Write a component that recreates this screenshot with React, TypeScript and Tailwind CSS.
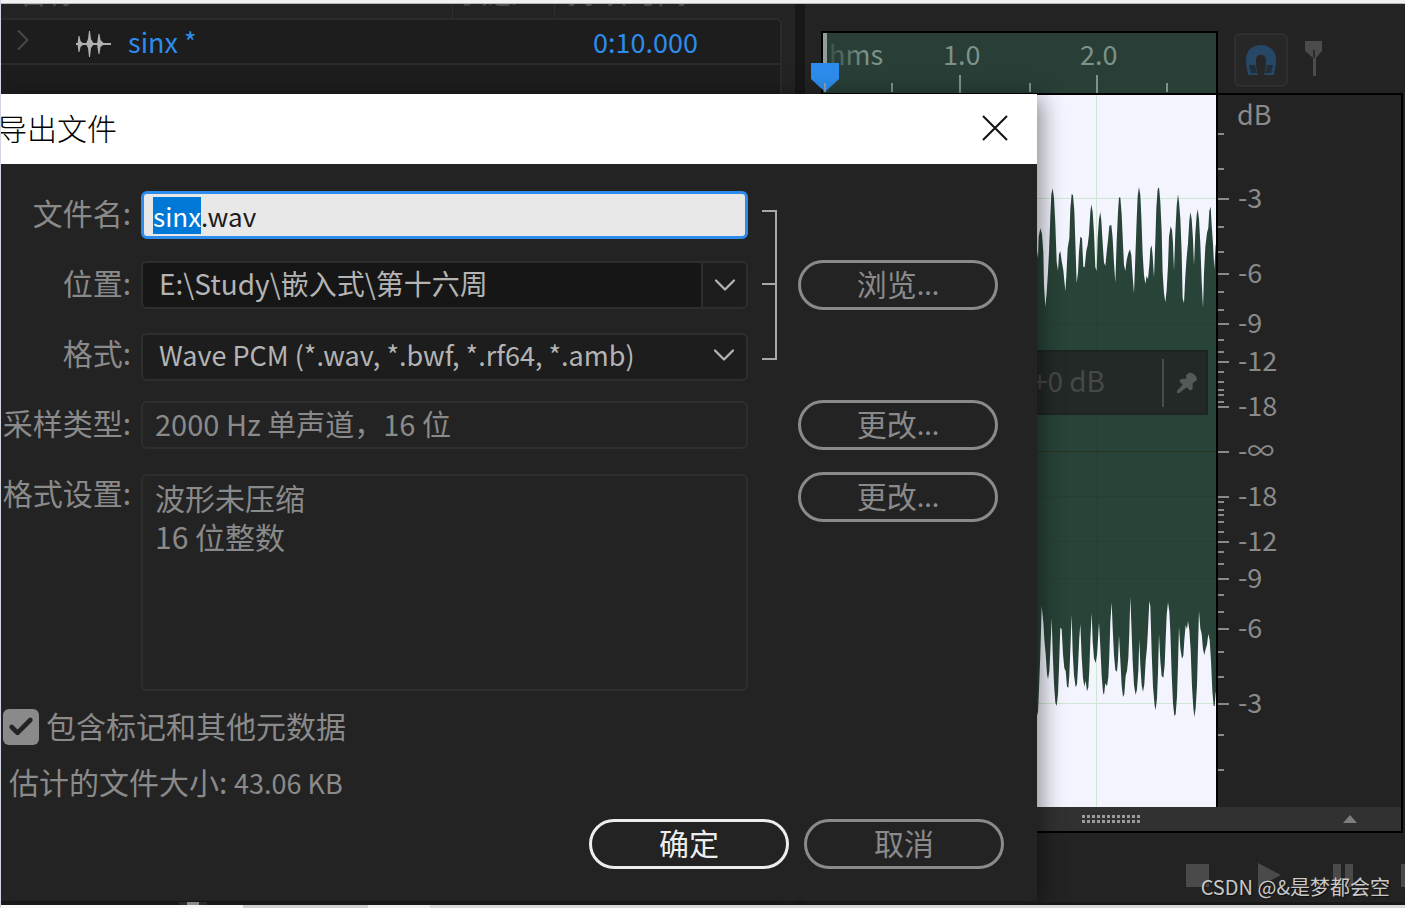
import React, { useEffect, useRef } from 'react';
import { Check, ChevronDown, ChevronRight } from 'lucide-react';

const upperWave =
  '50,475 54,505 56,440 61,415 66,432 70,488 72,585 76,650 80,608 84,545 87,487 91,378 94,313 98,295 102,325 106,402 110,515 114,542 117,492 121,484 125,512 130,541 136,604 139,558 143,475 148,445 151,356 155,312 159,315 163,362 166,455 170,580 174,547 177,485 181,440 186,445 190,530 194,532 199,482 203,466 207,433 211,366 214,343 218,366 222,429 226,532 230,543 233,444 237,388 241,366 244,392 248,460 252,518 256,527 260,487 264,450 268,407 274,405 278,445 282,520 286,578 290,455 294,366 297,322 301,323 305,373 309,462 312,525 316,543 320,510 325,489 330,478 334,496 338,560 342,610 346,502 350,390 353,318 357,291 361,315 364,380 368,492 372,555 376,582 380,557 384,568 388,525 391,477 395,466 398,498 402,563 406,452 409,354 413,298 417,292 421,335 425,423 428,548 432,610 436,637 440,600 444,527 447,440 452,409 456,420 459,460 462,542 466,428 470,348 474,313 477,335 481,385 485,487 488,625 492,640 496,557 500,502 504,460 508,392 511,366 515,387 519,448 522,526 526,430 530,375 533,358 537,387 541,462 545,572 549,654 552,548 556,470 561,429 565,413 568,362 572,350 575,405 579,462 583,538 587,464 590,464';

const lowerWave =
  '50,472 54,455 57,388 61,283 65,138 70,187 73,240 77,283 81,342 84,358 88,333 91,270 95,174 98,275 102,373 106,428 110,438 114,402 117,323 121,203 125,207 129,283 133,325 137,333 141,380 145,383 148,346 151,268 155,164 158,275 162,346 167,382 171,373 174,322 178,232 181,193 185,290 189,354 193,380 197,362 201,394 205,382 208,330 211,240 215,159 218,243 222,295 227,309 231,285 234,238 237,187 241,260 245,348 249,397 252,405 256,370 261,379 265,352 268,286 271,187 275,127 278,205 282,286 286,330 291,335 294,300 297,226 301,300 305,376 309,411 313,402 317,347 321,333 325,294 328,216 331,110 334,192 338,303 342,376 347,405 351,388 355,332 358,238 361,316 365,376 369,396 373,373 377,303 381,262 384,208 388,123 391,139 395,276 399,380 404,437 407,450 411,415 414,338 417,222 421,303 425,348 430,353 434,316 437,238 440,165 444,127 448,155 451,215 455,342 459,430 463,468 467,463 471,410 474,313 477,200 481,265 486,296 490,287 493,240 497,196 501,207 504,183 508,210 512,271 516,380 520,443 523,472 527,445 531,376 534,262 537,153 541,205 545,222 549,268 553,285 557,267 561,254 565,221 569,240 573,303 577,393 581,438 584,438 587,397 590,397';

const levels = [
  { y: 103, label: '-3' },
  { y: 178, label: '-6' },
  { y: 228, label: '-9' },
  { y: 266, label: '-12' },
  { y: 311, label: '-18' },
  { y: 356, label: '-∞' },
  { y: 401, label: '-18' },
  { y: 446, label: '-12' },
  { y: 483, label: '-9' },
  { y: 533, label: '-6' },
  { y: 608, label: '-3' }
];

const minorLevels = [
  38, 73, 131, 156, 196, 214, 244, 256, 276, 286, 294, 299, 306,
  406, 414, 419, 426, 436, 456, 468, 499, 516, 556, 581, 639, 674
];

const FilesPanel: React.FC = () => (
  <div className="overflow-hidden pr-[13px]">
    <table className="-mt-[29px] w-full table-fixed border-separate border-spacing-0 text-left">
      <thead>
        <tr className="text-[30px] leading-[30px] text-[#4c4c4c]">
          <th className="w-[451px] pb-[13px] pl-4 font-normal">名称</th>
          <th className="w-[102px] border-l border-[#2e2e2e] pb-[13px] pl-1 font-normal">状态</th>
          <th className="border-l border-[#2e2e2e] pb-[13px] pl-3 font-normal">持续时间</th>
        </tr>
      </thead>
      <tbody className="bg-[#1d1d1d] text-[27px] leading-[43px] text-[#2d8ceb]">
        <tr>
          <td className="border-y-2 border-[#2b2b2b] p-0">
            <div className="flex items-center">
              <ChevronRight className="mb-1 ml-1 h-9 w-9 text-[#4a4a4a]" strokeWidth={1.25} />
              <svg className="mt-1 mr-4 ml-[35px]" width="36" height="28" viewBox="0 0 36 28" fill="#b0b0b0">
                <path d="M0 13h35v2H0zM1.500 14 2.500 6h1l1 5 3.500 3-3.500 3-1 5h-1zM10 14l2-5 1-8h1l1 8 3 5-3 4-1 9h-1l-1-9zM21 14l1.500-10h1l1 6 4 4-4 3-1 7h-1z" />
              </svg>
              sinx *
            </div>
          </td>
          <td className="border-y-2 border-[#2b2b2b] p-0" />
          <td className="rounded-tr-md border-y-2 border-r-2 border-[#2b2b2b] p-0 pl-[39px]">0:10.000</td>
        </tr>
        <tr>
          <td colSpan={3} className="h-[900px] border-r-2 border-[#2b2b2b]" />
        </tr>
      </tbody>
    </table>
  </div>
);

const Ruler: React.FC = () => (
  <div className="flex">
    <div className="flex-1 border-2 border-b-0 border-black bg-[#283e37]">
      <svg className="block h-[60px] w-full overflow-visible text-[27px]" fill="#7d9288">
        <defs>
          <linearGradient id="fade" gradientUnits="userSpaceOnUse" x1="4" x2="44" y1="0" y2="0">
            <stop offset="0" stopColor="#354e45" />
            <stop offset="1" stopColor="#7d9288" />
          </linearGradient>
        </defs>
        <text x="6" y="32" fill="url(#fade)">hms</text>
        <text x="120" y="32">1.0</text>
        <text x="257" y="32">2.0</text>
        {[136, 273].map((x) => (
          <rect key={x} x={x} y="42" width="2" height="18" />
        ))}
        {[68, 206, 343].map((x) => (
          <rect key={x} x={x} y="50" width="2" height="9" />
        ))}
        <rect width="4" height="30" fill="#919f98" />
        <path d="M-12 30h28v16L2 59-12 46z" fill="#2d8ceb" />
        <rect x="1" y="50" width="2" height="9" fill="#8fa0a6" />
      </svg>
    </div>
    <div className="flex w-[187px] items-start gap-4 pt-0.5 pl-4">
      <button
        aria-label="Snap"
        className="flex h-[54px] w-[54px] items-center justify-center rounded-md border-2 border-[#2f2f2f] bg-[#272727]"
      >
        <svg width="30" height="30" viewBox="0 0 30 30">
          <path d="M2 30C1 24 0 20 0 15 0 5 7 0 15 0s15 5 15 15c0 5-1 9-2 15H18l2-10v-5c0-7-10-7-10 0v5l2 10z" fill="#264766" />
          <path d="M3 20h6l2 8H5zM27 20h-6l-2 8h6z" fill="#222d37" />
        </svg>
      </button>
      <svg className="mt-2" width="20" height="36" viewBox="0 0 20 36" fill="#4b4b4b">
        <path d="M1 0h17v10l-6 7v18h-3V17l-8-7z" />
        <path d="M9 9h2v8H9z" fill="#2b2b2b" />
      </svg>
    </div>
  </div>
);

const Waveform: React.FC = () => (
  <div className="relative flex-1 border-r-2 border-black bg-[#f4f4ff]">
    <svg className="block h-[712px] w-full overflow-hidden">
      <g fill="#cfe6d0">
        <rect x="273" width="1" height="100%" />
        <rect y="103" width="100%" height="1" />
        <rect y="608" width="100%" height="1" />
      </g>
      <g transform="translate(197 -5) scale(0.33333)">
        <polygon points={`-600,475 ${upperWave} 590,1120 -600,1120`} fill="#284338" />
      </g>
      <g transform="translate(197 465) scale(0.33333)">
        <polygon points={`-600,472 ${lowerWave} 590,-310 -600,-310`} fill="#284338" />
      </g>
      <g fill="#243d32" opacity="0.5">
        <rect y="228" width="100%" height="1" />
        <rect y="401" width="100%" height="1" />
        <rect y="446" width="100%" height="1" />
        <rect y="483" width="100%" height="1" />
        <rect x="273" y="180" width="1" height="352" />
      </g>
      <rect y="356" width="100%" height="1" fill="#2b3420" />
    </svg>

    {/* Gain HUD floats over the waveform */}
    <div className="absolute top-[255px] right-2 flex h-[65px] w-[300px] items-center justify-end border-2 border-[#1d2522] bg-[#232927] pr-2 text-[28px] text-[#454947]">
      <span className="pb-1.5">+0 dB</span>
      <span className="mr-3 ml-[57px] h-12 w-0.5 bg-[#484d4b]" />
      <svg width="22" height="22" viewBox="0 0 66 66" fill="#555a58">
        <path d="M30 10 38 3Q46 0 56 8q8 8 7 16L50 34v16l-7 6-11-10L10 63H3v-7l17-18-10-10 5-7 16-1z" />
      </svg>
    </div>
  </div>
);

const LevelScale: React.FC = () => (
  <svg className="block h-[712px] w-[183px] text-[27px]" fill="#8a8a8a">
    <text x="19" y="30">dB</text>
    {levels.map((level) => (
      <g key={level.y}>
        <rect y={level.y} width="11" height="2" />
        <text x="20" y={level.y + 10}>{level.label}</text>
      </g>
    ))}
    {minorLevels.map((y) => (
      <rect key={y} y={y} width="6" height="2" />
    ))}
  </svg>
);

const Editor: React.FC = () => (
  <div className="flex flex-col overflow-hidden border-l-[10px] border-[#171717] pt-[27px]">
    <div className="flex-none pl-4">
      <Ruler />
      <div className="mr-0.5 border-2 border-black">
        <div className="flex">
          <Waveform />
          <LevelScale />
        </div>
        <div className="flex h-6 items-center bg-[#313131]">
          <svg className="ml-[259px]" width="60" height="8" fill="#9a9a9a">
            {Array.from({ length: 12 }, (_, i) => (
              <g key={i}>
                <rect x={i * 5} y="0" width="3" height="3" />
                <rect x={i * 5} y="5" width="3" height="3" />
              </g>
            ))}
          </svg>
          <svg className="mr-11 ml-auto" width="14" height="8" fill="#7d7d7d">
            <path d="M7 0l7 8H0z" />
          </svg>
        </div>
      </div>
    </div>
    <div className="-mr-5 flex justify-end gap-12 pt-[30px] text-[#4a4a4a]">
      <button aria-label="Stop">
        <svg width="24" height="24" fill="currentColor"><path d="M1 1h23v23H1z" /></svg>
      </button>
      <button aria-label="Play">
        <svg width="24" height="24" fill="currentColor"><path d="M1 0l23 12L1 24z" /></svg>
      </button>
      <button aria-label="Pause">
        <svg width="24" height="24" fill="currentColor"><path d="M4 1h8v23H4zM16 1h8v23h-8z" /></svg>
      </button>
      <button aria-label="Previous">
        <svg width="24" height="24" fill="currentColor"><path d="M0 1h4v23H0zM24 1v23L6 12z" /></svg>
      </button>
    </div>
  </div>
);

const pill =
  'flex h-[50px] w-[200px] items-center justify-center rounded-full border-[3px] pb-1 text-[30px] leading-none';

const ExportDialog: React.FC = () => {
  const nameRef = useRef<HTMLInputElement>(null);

  useEffect(() => {
    nameRef.current?.focus();
    nameRef.current?.setSelectionRange(0, 4);
  }, []);

  return (
    <div
      role="dialog"
      aria-labelledby="export-title"
      className="absolute top-[94px] left-0 w-[1036px] max-w-full bg-[#232323] shadow-[4px_4px_22px_rgba(0,0,0,0.45)]"
    >
      {/* Title bar */}
      <div className="flex h-[70px] items-center justify-between overflow-hidden bg-white pb-0.5 text-black">
        <h1 id="export-title" className="-ml-1 pb-0.5 text-[30px] font-light">导出文件</h1>
        <button aria-label="Close" className="mr-[29px]">
          <svg width="26" height="26" viewBox="0 0 26 26" stroke="#111" strokeWidth="2">
            <path d="M1 1l24 24M25 1L1 25" />
          </svg>
        </button>
      </div>

      <form className="pt-[26px] pb-8 text-[30px] text-[#8a8a8a]">
        <div className="grid grid-cols-[130px_617px_50px_200px] grid-rows-[repeat(4,50px)_auto] gap-y-5">
          {/* File name */}
          <label htmlFor="name" className="text-right leading-[45px]">文件名:</label>
          <input
            id="name"
            ref={nameRef}
            defaultValue="sinx.wav"
            className="ml-2.5 h-12 self-center rounded-md border-[3px] border-[#2d8ceb] bg-[#e8e8e8] pl-[9px] text-[26px] text-[#1c1c1c] outline-none selection:bg-[#0078d7] selection:text-white"
          />
          <svg className="row-span-3 ml-3.5 self-center" width="16" height="150" fill="none" stroke="#a8a8a8" strokeWidth="2">
            <path d="M0 1h14v148H0M0 74h14" />
          </svg>
          <span />

          {/* Location */}
          <label htmlFor="location" className="text-right leading-[45px]">位置:</label>
          <div className="ml-2.5 flex h-12 self-center overflow-hidden rounded-md border-2 border-[#2e2e2e] text-[#b4b4b4]">
            <input
              id="location"
              defaultValue="E:\Study\嵌入式\第十六周"
              className="min-w-0 flex-1 bg-[#161616] pb-1 pl-4 text-[28px] outline-none"
            />
            <button type="button" aria-label="Recent" className="flex w-[45px] items-center justify-center border-l-2 border-[#2e2e2e] bg-[#1d1d1d]">
              <ChevronDown className="h-9 w-9" strokeWidth={1.5} />
            </button>
          </div>
          <button type="button" className={`${pill} col-start-4 border-[#8a8a8a]`}>
            浏览<span className="text-[27px]">...</span>
          </button>

          {/* Format */}
          <label htmlFor="format" className="text-right leading-[45px]">格式:</label>
          <div className="relative ml-2.5 h-12 self-center text-[#b4b4b4]">
            <select
              id="format"
              className="h-full w-full appearance-none rounded-md border-2 border-[#2e2e2e] bg-[#1d1d1d] pb-1 pl-4 text-[27px] outline-none"
            >
              <option>Wave PCM (*.wav, *.bwf, *.rf64, *.amb)</option>
            </select>
            <ChevronDown className="pointer-events-none absolute top-1.5 right-1.5 h-9 w-9" strokeWidth={1.5} />
          </div>
          <span />

          {/* Sample type */}
          <label htmlFor="sample" className="text-right leading-[45px]">采样类型:</label>
          <input
            id="sample"
            readOnly
            value="2000 Hz 单声道，16 位"
            className="ml-2.5 h-12 self-center rounded-md border-2 border-[#2e2e2e] pb-1 pl-3 text-[29px] outline-none"
          />
          <button type="button" className={`${pill} col-start-4 border-[#8a8a8a]`}>
            更改<span className="text-[27px]">...</span>
          </button>

          {/* Format settings */}
          <label htmlFor="settings" className="text-right leading-[45px]">格式设置:</label>
          <textarea
            id="settings"
            readOnly
            value={'波形未压缩\n16 位整数'}
            className="mt-1 ml-2.5 h-[217px] resize-none rounded-md border-2 border-[#2e2e2e] px-3 py-0.5 leading-[39px] outline-none"
          />
          <button type="button" className={`${pill} col-start-4 mt-0.5 border-[#8a8a8a]`}>
            更改<span className="text-[27px]">...</span>
          </button>
        </div>

        <label className="mt-4 flex items-center leading-10">
          <span className="relative mr-2 ml-0.5 h-9 w-9">
            <input type="checkbox" defaultChecked className="block h-9 w-9 appearance-none rounded-md bg-[#8a8a8a]" />
            <Check className="pointer-events-none absolute top-1 left-1 h-7 w-7 text-[#232323]" strokeWidth={4} />
          </span>
          <span className="-ml-px pb-1 leading-9">包含标记和其他元数据</span>
        </label>
        <p className="mt-3.5 ml-2 leading-10">
          估计的文件大小: <span className="text-[27px]">43.06 KB</span>
        </p>

        <div className="mt-4 mr-[33px] flex justify-end gap-[15px]">
          <button type="submit" className={`${pill} border-[#ededed] text-[#ededed]`}>确定</button>
          <button type="button" className={`${pill} border-[#8a8a8a]`}>取消</button>
        </div>
      </form>
    </div>
  );
};

const App: React.FC = () => {
  return (
    <div className="relative flex min-h-screen flex-col overflow-hidden border-l border-[#d4d4e0] bg-[#232323] font-['Noto_Sans_CJK_SC',sans-serif]">
      <div className="h-1 border-b border-[#b9b9b9] bg-[#f1f1f1]" />

      <div className="grid h-[898px] grid-cols-[794fr_610fr]">
        <FilesPanel />
        <Editor />
      </div>

      <ExportDialog />

      {/* Panel grip and window edge below */}
      <div className="relative flex h-[3px] bg-[#191919]">
        <span className="ml-[178px] h-full w-7 border-x-8 border-[#2b2b2b] bg-[#8a8a8a]" />
      </div>
      <div className="relative flex h-[3px] bg-[#d9d9d9]">
        <span className="w-[242px] bg-[#f8f8f8]" />
        <span className="w-[125px] bg-[#d0d0d0]" />
        <span className="w-[62px] bg-[#f0f0f0]" />
      </div>

      <p className="absolute right-[15px] bottom-[7px] text-xl text-[#c9c9c9] [text-shadow:1px_1px_1px_#111]">
        CSDN @&amp;是梦都会空
      </p>
    </div>
  );
};

export default App;
